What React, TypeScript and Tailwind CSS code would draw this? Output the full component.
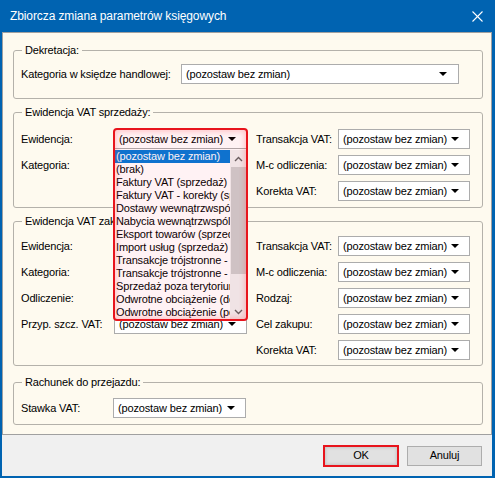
import React from "react";

const items = [
  "(pozostaw bez zmian)",
  "(brak)",
  "Faktury VAT (sprzedaż)",
  "Faktury VAT - korekty (sprzedaż)",
  "Dostawy wewnątrzwspólnotowe",
  "Nabycia wewnątrzwspólnotowe",
  "Eksport towarów (sprzedaż)",
  "Import usług (sprzedaż)",
  "Transakcje trójstronne - dostawa",
  "Transakcje trójstronne - nabycie",
  "Sprzedaż poza terytorium kraju",
  "Odwrotne obciążenie (dostawa)",
  "Odwrotne obciążenie (podatnik)",
];

function Arrow() {
  return (
    <svg width="8" height="4" viewBox="0 0 8 4" className="shrink-0">
      <polygon points="0,0 8,0 4,4" fill="#000" />
    </svg>
  );
}

function Select({ w, pr = 10 }: { w: string; pr?: number }) {
  return (
    <div
      className={`${w} h-[20px] shrink-0 bg-white border border-[#acacac] flex items-center pl-[4px] justify-between`}
      style={{ paddingRight: pr }}
    >
      <span className="whitespace-nowrap">(pozostaw bez zmian)</span>
      <Arrow />
    </div>
  );
}

function Chevron({ up }: { up?: boolean }) {
  return (
    <svg width="9" height="6" viewBox="0 0 9 6">
      <polyline
        points={up ? "1,5 4.5,1.5 8,5" : "1,1 4.5,4.5 8,1"}
        fill="none"
        stroke="#606060"
        strokeWidth="1.4"
      />
    </svg>
  );
}

function DropList() {
  return (
    <div className="absolute left-0 top-[20px] w-[133px] h-[171px] bg-white flex z-10 pt-[1px]">
      <div className="flex-1 flex flex-col overflow-hidden">
        {items.map((t, i) => (
          <div
            key={i}
            className={`h-[13px] leading-[13px] whitespace-nowrap overflow-hidden pl-[2px] ${
              i === 0 ? "bg-[#0078d7] text-white" : "text-black"
            }`}
          >
            {t}
          </div>
        ))}
      </div>
      <div className="w-[17px] flex flex-col bg-[#f0f0f0]">
        <div className="h-[17px] flex items-center justify-center">
          <Chevron up />
        </div>
        <div className="flex-1">
          <div className="h-[107px] mx-[1px] bg-[#cdcdcd]" />
        </div>
        <div className="h-[17px] flex items-center justify-center">
          <Chevron />
        </div>
      </div>
    </div>
  );
}

function Row({ label, lw, children }: { label: string; lw: string; children: React.ReactNode }) {
  return (
    <div className="h-[20px] flex items-center">
      <div className={`${lw} shrink-0 whitespace-nowrap`}>{label}</div>
      {children}
    </div>
  );
}

function Group({
  title,
  cls,
  children,
}: {
  title: string;
  cls: string;
  children: React.ReactNode;
}) {
  return (
    <fieldset className={`border border-[#b4b1aa] rounded-[3px] pl-[7px] ${cls}`}>
      <legend className="px-[3px] ml-[1px] leading-[14px]">{title}</legend>
      {children}
    </fieldset>
  );
}

export default function App() {
  return (
    <div
      className="w-[495px] h-[478px] bg-[#0063b1] flex flex-col text-[11px] text-black"
      style={{ fontFamily: "'Liberation Sans', Arial, sans-serif", letterSpacing: "-0.15px" }}
    >
      <div className="h-[32px] shrink-0 flex items-center pl-[10px] pr-[12px] justify-between text-white text-[12px] tracking-[-0.1px]">
        <span>Zbiorcza zmiana parametrów księgowych</span>
        <svg width="11" height="11" viewBox="0 0 11 11">
          <line x1="0.5" y1="0.5" x2="10.5" y2="10.5" stroke="#fff" strokeWidth="1.1" />
          <line x1="10.5" y1="0.5" x2="0.5" y2="10.5" stroke="#fff" strokeWidth="1.1" />
        </svg>
      </div>
      <div className="flex-1 ml-[2px] mr-[3px] mb-[2px] bg-[#f0f0f0] flex flex-col">
        <div className="h-[403px] shrink-0 border border-[#a0a0a0] bg-[#fefaef] pl-[10px] pr-[8px] pt-[10px] flex flex-col">
          <Group title="Dekretacja:" cls="pt-[7px] pb-[14px]">
            <Row label="Kategoria w księdze handlowej:" lw="w-[160px]">
              <Select w="w-[278px]" pr={11} />
            </Row>
          </Group>

          <Group title="Ewidencja VAT sprzedaży:" cls="mt-[6px] pt-[10px] pb-[6px] relative z-10">
            <div className="flex">
              <div className="flex flex-col gap-[6px]">
                <Row label="Ewidencja:" lw="w-[93px]">
                  <div className="relative">
                    <Select w="w-[133px]" />
                    <DropList />
                    <div className="absolute -left-[1px] -top-[1px] w-[135px] h-[193px] border-2 border-[#e8141c] rounded-[4px] bg-[rgba(255,40,60,0.06)] shadow-[inset_0_0_5px_2px_rgba(255,70,80,0.24)] z-20 pointer-events-none" />
                  </div>
                </Row>
                <Row label="Kategoria:" lw="w-[93px]">
                  <Select w="w-[133px]" />
                </Row>
              </div>
              <div className="flex flex-col gap-[6px] ml-[9px]">
                <Row label="Transakcja VAT:" lw="w-[82px]">
                  <Select w="w-[132px]" />
                </Row>
                <Row label="M-c odliczenia:" lw="w-[82px]">
                  <Select w="w-[132px]" />
                </Row>
                <Row label="Korekta VAT:" lw="w-[82px]">
                  <Select w="w-[132px]" />
                </Row>
              </div>
            </div>
          </Group>

          <Group title="Ewidencja VAT zakupu:" cls="mt-[6px] pt-[8px] pb-[5px]">
            <div className="flex">
              <div className="flex flex-col gap-[6px]">
                <Row label="Ewidencja:" lw="w-[93px]">
                  <Select w="w-[133px]" />
                </Row>
                <Row label="Kategoria:" lw="w-[93px]">
                  <Select w="w-[133px]" />
                </Row>
                <Row label="Odliczenie:" lw="w-[93px]">
                  <Select w="w-[133px]" />
                </Row>
                <Row label="Przyp. szcz. VAT:" lw="w-[93px]">
                  <Select w="w-[133px]" />
                </Row>
              </div>
              <div className="flex flex-col gap-[6px] ml-[9px]">
                <Row label="Transakcja VAT:" lw="w-[82px]">
                  <Select w="w-[132px]" />
                </Row>
                <Row label="M-c odliczenia:" lw="w-[82px]">
                  <Select w="w-[132px]" />
                </Row>
                <Row label="Rodzaj:" lw="w-[82px]">
                  <Select w="w-[132px]" />
                </Row>
                <Row label="Cel zakupu:" lw="w-[82px]">
                  <Select w="w-[132px]" />
                </Row>
                <Row label="Korekta VAT:" lw="w-[82px]">
                  <Select w="w-[132px]" />
                </Row>
              </div>
            </div>
          </Group>

          <Group title="Rachunek do przejazdu:" cls="mt-[9px] pt-[9px] pb-[6px]">
            <Row label="Stawka VAT:" lw="w-[92px]">
              <Select w="w-[133px]" />
            </Row>
          </Group>
        </div>
        <div className="flex-1 flex items-center justify-end gap-[8px] pr-[10px]">
          <div className="w-[76px] h-[22px] border-2 border-[#e8141c] bg-[#e1e1e1] shadow-[inset_0_0_3px_1px_rgba(0,0,0,0.12)] flex items-center justify-center">
            OK
          </div>
          <div className="w-[75px] h-[20px] border border-[#adadad] bg-[#e1e1e1] flex items-center justify-center">
            Anuluj
          </div>
        </div>
      </div>
    </div>
  );
}
